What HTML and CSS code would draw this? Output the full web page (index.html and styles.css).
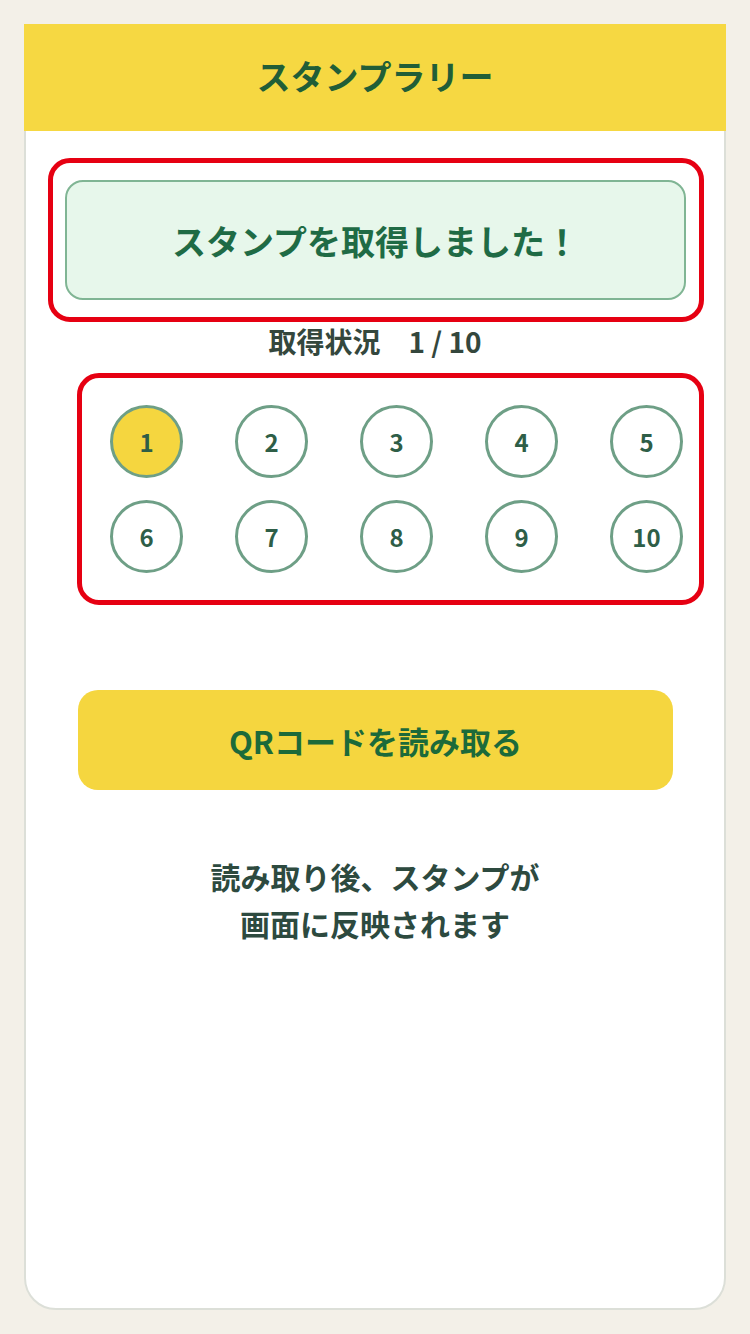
FILE: index.html
```html
<!DOCTYPE html>
<html lang="ja">

<head>
  <meta charset="UTF-8">
  <meta name="viewport" content="width=device-width, initial-scale=1.0">
  <title>スタンプラリー</title>
  <link rel="stylesheet" href="styles.css">
</head>

<body>

  <div class="card">
    <div class="header">スタンプラリー</div>

    <div class="notice-frame">
      <div class="notice">スタンプを取得しました！</div>
    </div>

    <div class="status">取得状況　1 / 10</div>

    <div class="stamp-frame">
      <div class="stamp-grid">
        <div class="stamp done">1</div>
        <div class="stamp">2</div>
        <div class="stamp">3</div>
        <div class="stamp">4</div>
        <div class="stamp">5</div>
        <div class="stamp">6</div>
        <div class="stamp">7</div>
        <div class="stamp">8</div>
        <div class="stamp">9</div>
        <div class="stamp">10</div>
      </div>
    </div>

    <button class="btn-scan">QRコードを読み取る</button>

    <p class="hint">読み取り後、スタンプが<br>画面に反映されます</p>
  </div>

</body>

</html>
```

FILE: styles.css
```css
* {
  box-sizing: border-box;
  margin: 0;
  padding: 0;
}

body {
  font-family: "Noto Sans CJK JP", "Noto Sans", sans-serif;
  font-weight: bold;
  background-color: #F3F0E8;
  padding: 24px;
}

.card {
  width: 702px;
  min-height: 1286px;
  background-color: #fff;
  border: 2px solid #DCDFD8;
  border-radius: 32px;
}

.header {
  margin: -2px -2px 0;
  height: 107px;
  background-color: #F6D842;
  color: #215E37;
  font-size: 34px;
  display: flex;
  justify-content: center;
  align-items: center;
  padding-bottom: 4px;
}

/* 赤枠：取得メッセージ */
.notice-frame {
  margin: 27px 20px 0 22px;
  border: 5px solid #E60012;
  border-radius: 22px;
  padding: 17px 13px 17px 12px;
}

.notice {
  height: 120px;
  background-color: #E7F7EB;
  border: 2px solid #80B594;
  border-radius: 18px;
  color: #1F6B45;
  font-size: 34px;
  display: flex;
  justify-content: center;
  align-items: center;
}

.status {
  text-align: center;
  font-size: 28px;
  line-height: 39px;
  color: #34473D;
}

/* 赤枠：スタンプ一覧 */
.stamp-frame {
  margin: 12px 20px 0 51px;
  border: 5px solid #E60012;
  border-radius: 22px;
  padding: 27px 17px 27px 28px;
}

.stamp-grid {
  display: grid;
  grid-template-columns: repeat(5, 73px);
  column-gap: 52px;
  row-gap: 22px;
}

.stamp {
  width: 73px;
  height: 73px;
  border: 3px solid #6E9F86;
  border-radius: 50%;
  display: flex;
  justify-content: center;
  align-items: center;
  font-size: 24px;
  color: #2E5E47;
}

.stamp.done {
  background-color: #F5D63F;
}

.btn-scan {
  display: flex;
  justify-content: center;
  align-items: center;
  width: 595px;
  height: 100px;
  margin: 85px 0 0 52px;
  background-color: #F5D63F;
  border: none;
  border-radius: 20px;
  font-family: inherit;
  font-weight: bold;
  font-size: 31px;
  color: #1C6A3A;
  cursor: pointer;
}

.hint {
  margin-top: 63px;
  text-align: center;
  font-size: 30px;
  line-height: 47px;
  color: #2D4A3F;
}
```
